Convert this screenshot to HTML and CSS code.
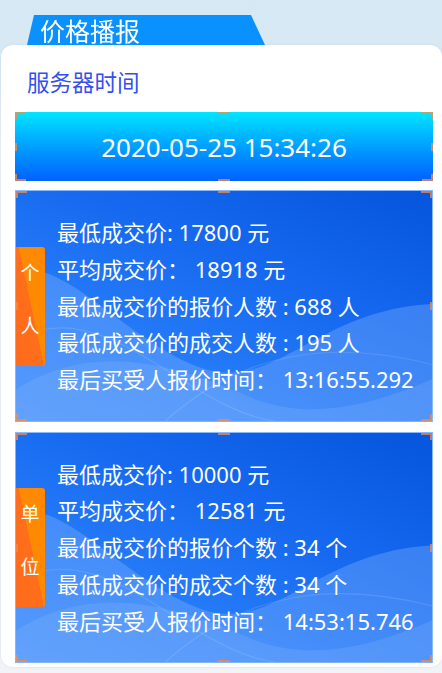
FILE: index.html
```html
<!DOCTYPE html>
<html lang="zh">
<head>
<meta charset="utf-8">
<title>价格播报</title>
<link rel="stylesheet" href="styles.css">
</head>
<body>
<div class="page">
  <div class="tab"><span class="tab-text">价格播报</span></div>
  <div class="panel">
    <div class="server-label">服务器时间</div>
    <div class="time-box marked">
      <span class="time-text">2020-05-25 15:34:26</span>
    </div>

    <div class="card marked">
      <svg class="waves" viewBox="0 0 418 232" preserveAspectRatio="none">
        <path d="M0,80 C50,68 110,150 185,178 C260,205 300,120 418,114 L418,232 L0,232 Z" fill="rgba(130,180,255,0.36)"/>
        <path d="M0,200 C80,150 160,175 240,210 C300,232 360,215 418,190 L418,232 L0,232 Z" fill="rgba(150,195,255,0.2)"/>
        <path d="M0,150 C90,100 170,220 260,232" fill="none" stroke="rgba(255,255,255,0.12)" stroke-width="1.2"/>
        <path d="M150,232 C230,160 320,150 418,175" fill="none" stroke="rgba(255,255,255,0.12)" stroke-width="1.2"/>
      </svg>
      <div class="badge"><span>个</span><span>人</span></div>
      <div class="lines">
        <div class="line">最低成交价: 17800 元</div>
        <div class="line">平均成交价： 18918 元</div>
        <div class="line">最低成交价的报价人数 : 688 人</div>
        <div class="line">最低成交价的成交人数 : 195 人</div>
        <div class="line">最后买受人报价时间： 13:16:55.292</div>
      </div>
    </div>

    <div class="card marked">
      <svg class="waves" viewBox="0 0 418 232" preserveAspectRatio="none">
        <path d="M0,80 C50,68 110,150 185,178 C260,205 300,120 418,114 L418,232 L0,232 Z" fill="rgba(130,180,255,0.36)"/>
        <path d="M0,200 C80,150 160,175 240,210 C300,232 360,215 418,190 L418,232 L0,232 Z" fill="rgba(150,195,255,0.2)"/>
        <path d="M0,150 C90,100 170,220 260,232" fill="none" stroke="rgba(255,255,255,0.12)" stroke-width="1.2"/>
        <path d="M150,232 C230,160 320,150 418,175" fill="none" stroke="rgba(255,255,255,0.12)" stroke-width="1.2"/>
      </svg>
      <div class="badge"><span>单</span><span>位</span></div>
      <div class="lines">
        <div class="line">最低成交价: 10000 元</div>
        <div class="line">平均成交价： 12581 元</div>
        <div class="line">最低成交价的报价个数 : 34 个</div>
        <div class="line">最低成交价的成交个数 : 34 个</div>
        <div class="line">最后买受人报价时间： 14:53:15.746</div>
      </div>
    </div>
  </div>
</div>
</body>
</html>
```

FILE: styles.css
```css
html, body {
  margin: 0;
  padding: 0;
}
body {
  width: 442px;
  height: 673px;
  overflow: hidden;
  background: linear-gradient(180deg, #d5e8f3 0px, #d8e9f4 60px, #edf1f6 160px, #f1f3f6 673px);
  font-family: "Noto Sans", "Noto Sans CJK SC", sans-serif;
}
.page {
  padding-top: 15px;
}
.tab {
  margin-left: 27px;
  width: 238px;
  height: 30px;
  background: #0891ff;
  clip-path: polygon(7px 0, 224px 0, 238px 30px, 0 30px);
  display: flex;
  align-items: center;
  filter: drop-shadow(0 2px 2px rgba(0, 90, 200, 0.25));
}
.tab-text {
  padding-left: 13px;
  color: #ffffff;
  font-size: 25px;
  line-height: 30px;
  font-family: "Noto Sans CJK SC", sans-serif;
}
.panel {
  margin-left: 1px;
  background: #ffffff;
  border-radius: 12px;
  padding: 0 9px 4px 14px;
  box-shadow: 0 0 3px rgba(180, 200, 220, 0.35);
}
.server-label {
  padding-top: 22px;
  padding-left: 12px;
  height: 28px;
  line-height: 28px;
  font-size: 22.5px;
  color: #3350ee;
  font-family: "Noto Sans CJK SC", sans-serif;
  margin-bottom: 17px;
}
.marked {
  position: relative;
}
.marked::after {
  content: "";
  position: absolute;
  inset: 0;
  pointer-events: none;
  background-image:
    linear-gradient(#ff8a3c, #ff8a3c),
    linear-gradient(#ff8a3c, #ff8a3c),
    linear-gradient(#ff8a3c, #ff8a3c),
    linear-gradient(#ff8a3c, #ff8a3c),
    linear-gradient(#ff8a3c, #ff8a3c),
    linear-gradient(#ff8a3c, #ff8a3c),
    linear-gradient(#ff8a3c, #ff8a3c),
    linear-gradient(#ff8a3c, #ff8a3c),
    linear-gradient(#ff8a3c, #ff8a3c),
    linear-gradient(#ff8a3c, #ff8a3c),
    linear-gradient(#ff8a3c, #ff8a3c),
    linear-gradient(#ff8a3c, #ff8a3c);
  background-repeat: no-repeat;
  background-size:
    11px 2px, 2px 7px,
    11px 2px, 2px 7px,
    11px 2px, 2px 7px,
    11px 2px, 2px 7px,
    12px 2px, 12px 2px,
    2px 8px, 2px 8px;
  background-position:
    left top, left top,
    right top, right top,
    left bottom, left bottom,
    right bottom, right bottom,
    center top, center bottom,
    left center, right center;
  opacity: 0.75;
}
.time-box {
  height: 69px;
  background: linear-gradient(180deg, #00e6ff 0%, #0099ff 55%, #0062ff 100%);
  display: flex;
  align-items: center;
  justify-content: center;
  margin-bottom: 9px;
}
.time-text {
  color: #ffffff;
  font-size: 26px;
  line-height: 30px;
  padding-top: 1px;
}
.card {
  height: 232px;
  box-sizing: border-box;
  border: 1px solid rgba(150, 195, 255, 0.85);
  background: linear-gradient(205deg, #0655dc 0%, #1467ee 35%, #2479f7 65%, #3d8bfb 100%);
  display: flex;
  align-items: center;
  overflow: hidden;
  margin-bottom: 10px;
}
.card:last-child {
  margin-bottom: 0;
  height: 231px;
}
.waves {
  position: absolute;
  left: 0;
  top: 0;
  width: 100%;
  height: 100%;
}
.badge {
  position: relative;
  box-sizing: border-box;
  width: 30px;
  height: 119px;
  margin-left: -1px;
  padding-bottom: 16px;
  border-radius: 0 3px 3px 0;
  background: linear-gradient(78deg, #ff6a1c 0%, #ff6f1a 52%, #ff8a00 53%, #ff8800 100%);
  display: flex;
  flex-direction: column;
  align-items: center;
  justify-content: center;
  gap: 33px;
  color: #ffffff;
  font-size: 19px;
  line-height: 20px;
  font-family: "Noto Sans CJK SC", sans-serif;
  flex-shrink: 0;
}
.lines {
  position: relative;
  margin-left: 12px;
  color: #ffffff;
  font-size: 22px;
  line-height: 36.7px;
  white-space: nowrap;
}
.line {
  height: 36.7px;
}
```
